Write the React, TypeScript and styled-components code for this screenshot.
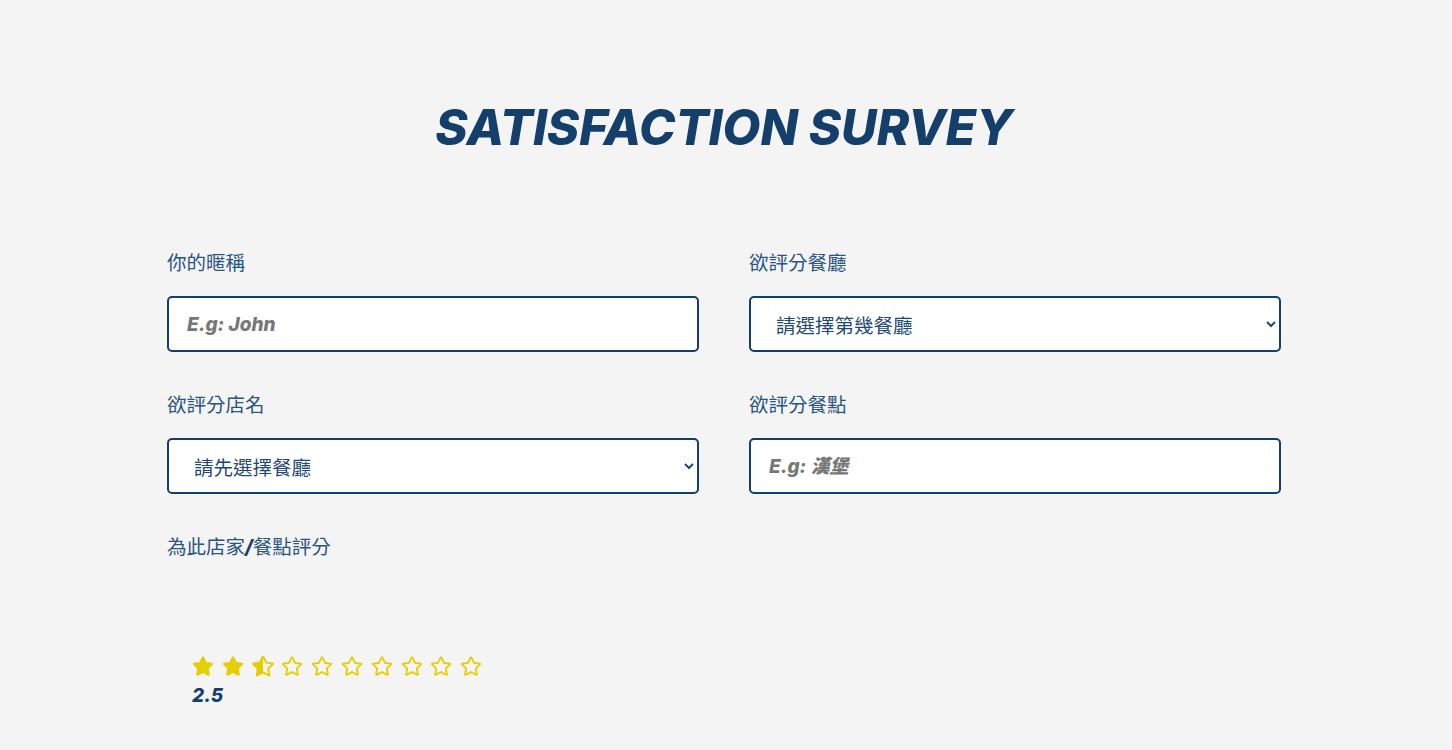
import * as React from 'react';
import styled, { createGlobalStyle } from 'styled-components';
import { FaStar, FaStarHalfAlt, FaRegStar } from 'react-icons/fa';

const GlobalStyle = createGlobalStyle`
  body {
    margin: 0;
    background: #f4f4f4;
    font-family: 'Noto Sans', 'Noto Sans CJK TC', sans-serif;
  }
`;

const Page = styled.div`
  width: 1114px;
  margin: 0 auto;
  padding: 96px 0 40px;
  transform: translateX(-2px);
`;

const Title = styled.h1`
  margin: 0 0 87px;
  text-align: center;
  font-family: 'Inter', 'Noto Sans', sans-serif;
  font-style: italic;
  font-weight: 800;
  font-size: 49px;
  line-height: 64px;
  color: #133f6a;
`;

const Form = styled.form`
  display: grid;
  grid-template-columns: 1fr 1fr;
  column-gap: 50px;
  row-gap: 37px;
`;

const Field = styled.div`
  display: flex;
  flex-direction: column;
  gap: 19px;
`;

const Label = styled.label`
  font-family: 'Noto Sans CJK TC', 'Noto Sans', sans-serif;
  font-size: 19.5px;
  line-height: 30px;
  color: #2a5581;
  font-weight: 400;
`;

const Slash = styled.span`
  font-family: 'Inter', sans-serif;
  font-weight: 800;
  font-style: italic;
  color: #133f6a;
`;

const TextInput = styled.input`
  box-sizing: border-box;
  height: 56px;
  width: 100%;
  border: 2px solid #133f6a;
  border-radius: 5px;
  background: #fff;
  padding: 0 18px;
  font-family: 'Inter', 'Noto Sans CJK TC', sans-serif;
  font-size: 19px;
  color: #133f6a;
  outline: none;

  &::placeholder {
    color: #777;
    font-weight: 800;
    font-style: italic;
  }
`;

const Select = styled.select`
  box-sizing: border-box;
  height: 56px;
  width: 100%;
  border: 2px solid #133f6a;
  border-radius: 5px;
  background: #fff;
  padding: 0 8px 0 21px;
  font-family: 'Noto Sans CJK TC', sans-serif;
  font-size: 19.5px;
  color: #1e4a74;
  outline: none;
`;

const RatingBlock = styled.div`
  padding: 93px 0 0 25px;
`;

const Stars = styled.div`
  display: flex;
  gap: 7.8px;
  color: #e6cf00;
  font-size: 22px;
`;

const Score = styled.div`
  margin-top: 7px;
  font-family: 'Inter', sans-serif;
  font-style: italic;
  font-weight: 800;
  font-size: 19px;
  color: #133f6a;
`;

const rating = 2.5;

const App = () => {
  const stars = Array.from({ length: 10 }, (_, i) => {
    if (rating >= i + 1) return <FaStar key={i} />;
    if (rating > i) return <FaStarHalfAlt key={i} />;
    return <FaRegStar key={i} />;
  });

  return (
    <>
      <GlobalStyle />
      <Page>
        <Title>SATISFACTION SURVEY</Title>
        <Form>
          <Field>
            <Label>你的暱稱</Label>
            <TextInput placeholder="E.g: John" />
          </Field>
          <Field>
            <Label>欲評分餐廳</Label>
            <Select defaultValue="">
              <option value="">請選擇第幾餐廳</option>
            </Select>
          </Field>
          <Field>
            <Label>欲評分店名</Label>
            <Select defaultValue="">
              <option value="">請先選擇餐廳</option>
            </Select>
          </Field>
          <Field>
            <Label>欲評分餐點</Label>
            <TextInput placeholder="E.g: 漢堡" />
          </Field>
          <Field>
            <Label>
              為此店家<Slash>/</Slash>餐點評分
            </Label>
          </Field>
        </Form>
        <RatingBlock>
          <Stars>{stars}</Stars>
          <Score>{rating}</Score>
        </RatingBlock>
      </Page>
    </>
  );
};

export default App;
